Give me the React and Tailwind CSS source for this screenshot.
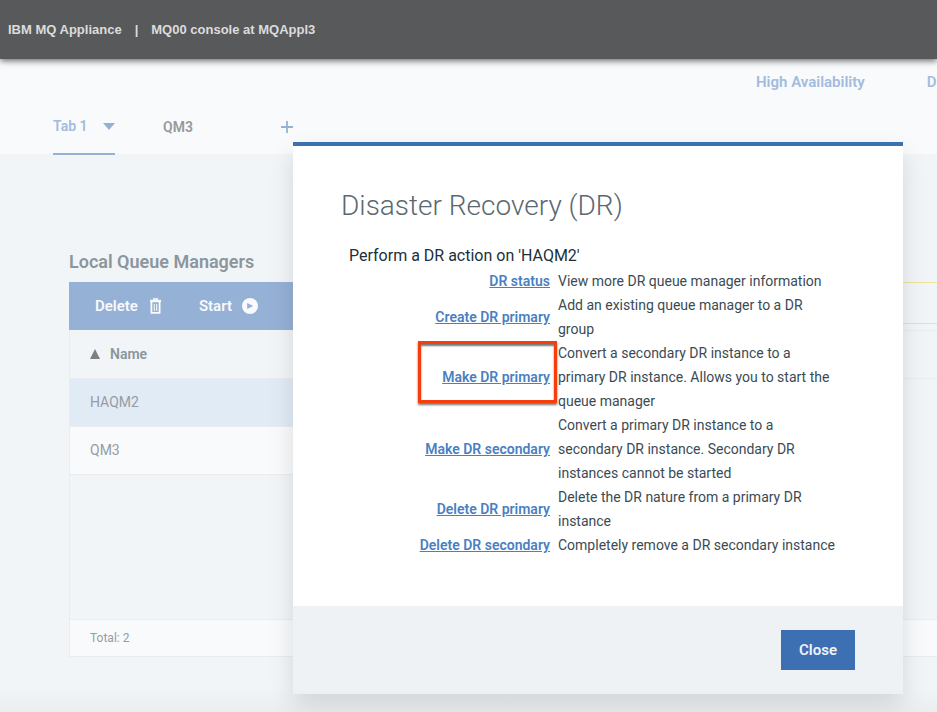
const actions = [
  { name: 'DR status', text: 'View more DR queue manager information' },
  { name: 'Create DR primary', text: 'Add an existing queue manager to a DR group' },
  {
    name: 'Make DR primary',
    text: 'Convert a secondary DR instance to a primary DR instance. Allows you to start the queue manager',
    highlighted: true,
  },
  {
    name: 'Make DR secondary',
    text: 'Convert a primary DR instance to a secondary DR instance. Secondary DR instances cannot be started',
  },
  { name: 'Delete DR primary', text: 'Delete the DR nature from a primary DR instance' },
  { name: 'Delete DR secondary', text: 'Completely remove a DR secondary instance' },
];

function TrashIcon() {
  return (
    <svg width="11" height="16" viewBox="0 0 11 16" fill="none" stroke="currentColor" aria-hidden="true">
      <path d="M3 1h5" strokeWidth="1.6" />
      <path d="M0 3h11" strokeWidth="2.4" />
      <path d="M1.4 4v10.9h8.2V4" strokeWidth="1.8" />
      <path d="M4.3 6v7M6.7 6v7" strokeWidth="1" />
    </svg>
  );
}

function PlayIcon() {
  return (
    <svg width="16" height="16" viewBox="0 0 16 16" aria-hidden="true">
      <circle cx="8" cy="8" r="8" className="fill-[#f8fafb]" />
      <path d="M5.2 5l6 3-6 3z" className="fill-[#96b1d6]" />
    </svg>
  );
}

function ConsoleHeader() {
  return (
    <header className="relative flex h-[59px] items-center gap-[13px] bg-[#58595b] px-2 font-['Liberation_Sans',Arial,sans-serif] text-[13px] font-bold text-[#dcdcdc] shadow-[0_2px_6px_rgba(60,65,55,0.75)]">
      <span>IBM MQ Appliance</span>
      <span>|</span>
      <span>MQ00 console at MQAppl3</span>
    </header>
  );
}

function TabArea() {
  return (
    <div className="h-[95px] bg-[#f8fafb] text-sm font-semibold">
      <nav className="flex h-12 items-center gap-[62px] overflow-hidden pl-[756px] text-[15px] whitespace-nowrap text-[#a3bbdd]">
        <a href="#ha">High Availability</a>
        <a href="#dr">D</a>
      </nav>
      <div className="flex h-12 items-stretch pl-[53px]">
        <button className="flex w-[62px] items-center justify-between border-b-2 border-[#96b1d6] pb-2 text-[#a3bbdd]">
          <span>Tab 1</span>
          <svg width="12" height="7" viewBox="0 0 12 7" className="fill-[#96b1d6]" aria-hidden="true">
            <path d="M0 0h12L6 7z" />
          </svg>
        </button>
        <button className="ml-12 w-8 pb-2 text-left text-[#94999d]">QM3</button>
        <button aria-label="Add tab" className="ml-[86px] pb-2 text-[#96b1d6]">
          <svg width="12" height="12" viewBox="0 0 12 12" stroke="currentColor" strokeWidth="1.8" aria-hidden="true">
            <path d="M6 0v12M0 6h12" />
          </svg>
        </button>
      </div>
    </div>
  );
}

function QueueManagers() {
  return (
    <section className="flex-1">
      <h2 className="mb-2 text-lg leading-6 font-semibold text-[#8c969c]">Local Queue Managers</h2>
      <div className="flex h-12 items-center gap-[38px] bg-[#96b1d6] px-[26px] text-[15px] font-semibold text-[#f8fafb]">
        <button className="flex items-center gap-3">
          Delete <TrashIcon />
        </button>
        <button className="flex items-center gap-[10px]">
          Start <PlayIcon />
        </button>
      </div>
      <div className="h-[289px] border-x border-[#e9edef]">
        <table className="w-full text-left text-sm text-[#959da2]">
          <thead>
            <tr className="h-12 border-b border-[#e9edef]">
              <th className="px-5 font-semibold text-[#8c969c]">
                <span className="flex items-center gap-[10px]">
                  <svg width="10" height="10" viewBox="0 0 10 10" className="fill-[#7d7f80]" aria-hidden="true">
                    <path d="M5 0l5 10H0z" />
                  </svg>
                  Name
                </span>
              </th>
            </tr>
          </thead>
          <tbody>
            <tr className="h-12 border-b border-[#e9edef] bg-[#e1ebf5]">
              <td className="px-5">HAQM2</td>
            </tr>
            <tr className="h-12 border-b border-[#e9edef] bg-[#f8fafb]">
              <td className="px-5">QM3</td>
            </tr>
          </tbody>
        </table>
      </div>
      <div className="flex h-[38px] items-center border border-[#e9edef] bg-[#f8fafb] px-5 text-xs text-[#959da2]">
        Total: 2
      </div>
    </section>
  );
}

function SidePanel() {
  return (
    <section className="flex-1 pt-8">
      <div className="mb-[6px] h-[42px] border-y border-[#f0e49a]" />
      <div className="h-[49px] border-y border-[#e9edef]" />
      <div className="h-60" />
      <div className="h-[38px] border-y border-[#e9edef] bg-[#f8fafb]" />
    </section>
  );
}

function DisasterRecoveryDialog() {
  return (
    <div
      role="dialog"
      aria-labelledby="dr-title"
      className="flex-1 border-t-4 border-[#3d70b2] bg-white shadow-[0_12px_24px_rgba(0,0,0,0.12)]"
    >
      <div className="px-12 pt-[42px] pb-[49px]">
        <h1 id="dr-title" className="text-[28px] leading-9 font-light text-[#5a6872]">
          Disaster Recovery (DR)
        </h1>
        <table className="mt-5 text-sm leading-6 text-[#3b4b54]">
          <caption className="pb-px pl-2 text-left text-base leading-6 text-[#20303a]">
            Perform a DR action on 'HAQM2'
          </caption>
          <tbody>
            {actions.map((action) => (
              <tr key={action.name}>
                <th scope="row" className="relative w-[213px] pr-1 text-right font-semibold whitespace-nowrap">
                  <a href="#action" className="text-[#4a7fc3] underline">
                    {action.name}
                  </a>
                  {action.highlighted && (
                    <span className="pointer-events-none absolute top-0 -right-[3px] h-[62px] w-[139px] border-[3px] border-[#f93c0c] shadow-[0_2px_2px_rgba(60,60,60,0.7),inset_0_2px_2px_rgba(60,60,60,0.7)]" />
                  )}
                </th>
                <td className="w-[284px] pl-1">{action.text}</td>
              </tr>
            ))}
          </tbody>
        </table>
      </div>
      <footer className="flex h-[88px] items-center justify-end bg-[#eff2f5] px-12">
        <button className="h-10 w-[74px] bg-[#3d70b2] text-[15px] font-semibold text-[#eef3fa]">Close</button>
      </footer>
    </div>
  );
}

export default function App() {
  return (
    <div className="relative min-h-screen overflow-hidden bg-[#f1f5f8] font-['Roboto',sans-serif]">
      <ConsoleHeader />
      <TabArea />
      <main className="flex gap-5 pt-24 pl-[69px]">
        <QueueManagers />
        <SidePanel />
      </main>
      <div className="absolute inset-x-0 top-[142px] flex pr-[34px] pl-[293px]">
        <DisasterRecoveryDialog />
      </div>
      <div className="absolute inset-x-0 bottom-0 h-6 bg-linear-to-b from-transparent to-black/3" />
    </div>
  );
}
